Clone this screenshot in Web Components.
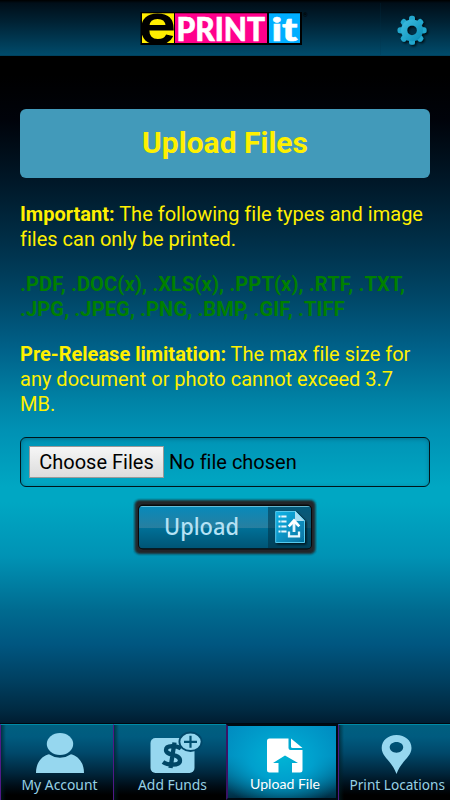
<!DOCTYPE html>
<html lang="en">
<head>
    <meta charset="UTF-8">
    <title>ePRINTit - Upload Files</title>
    <style>
        html, body {
            margin: 0;
            height: 100%;
        }
        body {
            font-family: Roboto, "Liberation Sans", sans-serif;
            font-size: 20px;
            font-variant-ligatures: none;
            line-height: 25px;
            overflow: hidden;
        }
        .types {
            --color: #008000;
            letter-spacing: .16px;
        }
    </style>
</head>
<body>
    <print-app>
        <app-header slot="header"></app-header>
        <page-title>Upload Files</page-title>
        <info-text><b>Important:</b> The following file types and image files can only be printed.</info-text>
        <info-text class="types"><b>.PDF, .DOC(x), .XLS(x), .PPT(x), .RTF, .TXT, .JPG, .JPEG, .PNG, .BMP, .GIF, .TIFF</b></info-text>
        <info-text><b>Pre-Release limitation:</b> The max file size for any document or photo cannot exceed 3.7 MB.</info-text>
        <file-picker><span slot="button">Choose Files</span>No file chosen</file-picker>
        <upload-button></upload-button>
        <nav-bar slot="footer">
            <nav-item label="My Account" left="20.5" width="76">
                <svg width="112" height="76" viewBox="1 0 112 76" fill="#96d7ef">
                    <ellipse cx="60" cy="19" rx="13.2" ry="11"/>
                    <path d="M36 48C36 37 42 31 49 29.200Q60 36.500 71 29.200C78 31 84 37 84 48Z"/>
                </svg>
            </nav-item>
            <nav-item label="Add Funds" left="24" width="69">
                <svg width="112" height="76" viewBox="1 0 112 76">
                    <rect x="37.500" y="13" width="44" height="35" rx="5" fill="#96d7ef"/>
                    <path d="M68 23.500C64 20.500 53 19.500 53 25C53 31 67 28.500 67 35.500C67 41.500 54 40 50 37M61.500 17.500L57.500 43" fill="none" stroke="#004766" stroke-width="4.300"/>
                    <ellipse cx="77.500" cy="16.800" rx="12" ry="10.200" fill="#00486a"/>
                    <ellipse cx="77.500" cy="16.800" rx="10.200" ry="8.300" fill="#96d7ef"/>
                    <path d="M77.500 10.800v12M71 16.800h13" stroke="#005071" stroke-width="2.200"/>
                </svg>
            </nav-item>
            <nav-item label="Upload File" left="22" width="70" active>
                <svg width="112" height="76" viewBox="1.500 1.500 112 76" fill="#fff">
                    <path d="M43 14H62V23.500Q62 25.500 64 25.500H76V45.500Q76 48 73.500 48H65.500V38.500H71.500L58.500 31L46.500 38.500H52V48H43Q40.500 48 40.500 45.500V16.500Q40.500 14 43 14Z"/>
                    <path d="M64.500 14L76 23.500H66Q64.500 23.500 64.500 22Z"/>
                </svg>
            </nav-item>
            <nav-item label="Print Locations" left="10.500" width="95.500">
                <svg width="112" height="76" viewBox="1 0 112 76" fill="#96d7ef" fill-rule="evenodd">
                    <path d="M58.500 10C67 10 73.500 15.500 73.500 23C73.500 32 63 36 58.500 49C54 36 43.700 32 43.700 23C43.700 15.500 50 10 58.500 10ZM58.500 17C54.500 17 51.700 19.300 51.700 22.300S54.500 27.700 58.500 27.700S65.200 25.300 65.200 22.300S62.500 17 58.500 17Z"/>
                </svg>
            </nav-item>
        </nav-bar>
    </print-app>

    <script>
        class PrintApp extends HTMLElement {
            constructor() {
                super();
                this.attachShadow({mode: 'open'}).innerHTML = `
                    <style>
                        :host {
                            display: flex;
                            flex-direction: column;
                            width: 450px;
                            height: 800px;
                            background: linear-gradient(#000 0, #000 75px, #00030a 120px, #001727 180px, #00324c 250px,
                                #004869 300px, #00628a 350px, #0082a5 400px, #0090b3 427px, #00a7c3 487px, #00a7c3 502px,
                                #0093b5 556px, #006b90 610px, #005680 645px, #004061 680px, #002a42 710px, #001c30 724px);
                        }
                        main {
                            display: flex;
                            flex-direction: column;
                            flex: 1;
                            padding: 53px 20px 0;
                        }
                    </style>
                    <slot name="header"></slot>
                    <main><slot></slot></main>
                    <slot name="footer"></slot>
                `;
            }
        }

        class AppHeader extends HTMLElement {
            constructor() {
                super();
                // gear outline with eight rounded teeth
                let teeth = '';
                for (let i = 0; i < 8; i++) {
                    teeth += `<rect x="-3" y="-14.500" width="6" height="8" rx="2.500" transform="rotate(${i * 45})"/>`;
                }
                this.attachShadow({mode: 'open'}).innerHTML = `
                    <style>
                        :host {
                            display: block;
                            height: 56px;
                            background: linear-gradient(#000 0, #000e18 3px, #002234 22px, #004b6b 55px, #003850 56px);
                        }
                        svg { display: block; overflow: visible; }
                    </style>
                    <svg width="450" height="56" viewBox="0 0 450 56">
                        <defs>
                            <linearGradient id="gear" x1="0" y1="0" x2="1" y2="1">
                                <stop offset="0" stop-color="#38b8dc"/>
                                <stop offset="1" stop-color="#0e91b9"/>
                            </linearGradient>
                            <filter id="shade" x="-30%" y="-30%" width="170%" height="170%">
                                <feDropShadow dx="1.500" dy="1.500" stdDeviation="1" flood-color="#000" flood-opacity=".8"/>
                            </filter>
                        </defs>
                        <rect x="140.500" y="12" width="161.500" height="33" fill="#000"/>
                        <rect x="142" y="13.300" width="32" height="29.700" fill="#ffed00"/>
                        <rect x="175" y="13.300" width="92" height="29.700" fill="#ff008c"/>
                        <rect x="269" y="13.300" width="31" height="29.700" fill="#00aeff"/>
                        <text x="139.500" y="43" font-family="Liberation Sans" font-size="54" stroke="#000" stroke-width="1.800" textLength="36" lengthAdjust="spacingAndGlyphs">e</text>
                        <g fill="#fff" stroke="#fff" stroke-width=".6" font-family="Lato" font-weight="900">
                            <text x="176.500" y="40.500" font-size="33" textLength="88.500" lengthAdjust="spacingAndGlyphs">PRINT</text>
                            <text x="271.500" y="40.500" font-size="33" textLength="26" lengthAdjust="spacingAndGlyphs">it</text>
                        </g>
                        <text x="303" y="17" font-size="6">®</text>
                        <path d="M380.500 3V55" stroke="#00334b" opacity=".2"/>
                        <g transform="translate(412 30.300)" filter="url(#shade)">
                            <g fill="#22a7cd">${teeth}</g>
                            <circle r="7.900" fill="none" stroke="url(#gear)" stroke-width="6"/>
                        </g>
                    </svg>
                `;
            }
        }

        class PageTitle extends HTMLElement {
            constructor() {
                super();
                this.attachShadow({mode: 'open'}).innerHTML = `
                    <style>
                        :host {
                            display: flex;
                            align-items: center;
                            justify-content: center;
                            box-sizing: border-box;
                            height: 69px;
                            margin-bottom: 24px;
                            padding-bottom: 2px;
                            border-radius: 6px;
                            background: #429aba;
                            color: #fff000;
                            font-size: 30px;
                            font-weight: bold;
                        }
                    </style>
                    <slot></slot>
                `;
            }
        }

        class InfoText extends HTMLElement {
            constructor() {
                super();
                this.attachShadow({mode: 'open'}).innerHTML = `
                    <style>
                        :host {
                            display: block;
                            margin-bottom: 20px;
                            color: var(--color, #fff000);
                        }
                    </style>
                    <slot></slot>
                `;
            }
        }

        class FilePicker extends HTMLElement {
            constructor() {
                super();
                this.attachShadow({mode: 'open'}).innerHTML = `
                    <style>
                        :host {
                            display: flex;
                            align-items: center;
                            gap: 5px;
                            box-sizing: border-box;
                            height: 50px;
                            padding-left: 8px;
                            border: 1px solid #00151b;
                            border-radius: 6px;
                            box-shadow: inset 0 1px 4px rgba(0, 60, 80, .4);
                            color: #000;
                        }
                        button {
                            box-sizing: border-box;
                            width: 135px;
                            height: 32px;
                            padding: 0;
                            border: 1px solid #999;
                            outline: 0;
                            background: linear-gradient(#f6f6f6, #dcdcdc);
                            font: inherit;
                            color: inherit;
                            white-space: nowrap;
                        }
                    </style>
                    <button><slot name="button"></slot></button>
                    <slot></slot>
                `;
            }
        }

        class UploadButton extends HTMLElement {
            constructor() {
                super();
                this.attachShadow({mode: 'open'}).innerHTML = `
                    <style>
                        :host {
                            display: block;
                            align-self: center;
                            margin-top: 11px;
                        }
                        svg { display: block; }
                    </style>
                    <svg width="184" height="58" viewBox="133 498 184 58">
                        <defs>
                            <linearGradient id="face" x1="0" y1="0" x2="0" y2="1">
                                <stop offset="0" stop-color="#078abb"/>
                                <stop offset=".51" stop-color="#277fa0"/>
                                <stop offset=".53" stop-color="#006f96"/>
                                <stop offset="1" stop-color="#005474"/>
                            </linearGradient>
                            <linearGradient id="paper" x1="0" y1="0" x2="1" y2="1">
                                <stop offset="0" stop-color="#13b5e8"/>
                                <stop offset="1" stop-color="#05719f"/>
                            </linearGradient>
                            <filter id="soft"><feGaussianBlur stdDeviation=".8"/></filter>
                            <filter id="drop"><feDropShadow dx="1.500" dy="1.500" stdDeviation="1" flood-opacity=".7"/></filter>
                            <clipPath id="inner"><rect x="139" y="506" width="172" height="42.500" rx="4"/></clipPath>
                        </defs>
                        <rect x="134.500" y="500" width="181" height="54" rx="5" fill="#20282b" filter="url(#soft)"/>
                        <rect x="138" y="504.500" width="174" height="45" rx="5" fill="#07090a"/>
                        <g clip-path="url(#inner)">
                            <rect x="139" y="506" width="172" height="42.500" fill="url(#face)"/>
                            <rect x="268" y="506" width="43" height="42.500" fill="#002c3e" opacity=".5"/>
                            <path d="M139 506.500H311" stroke="#7ccbe2" opacity=".8"/>
                        </g>
                        <text x="164" y="534.500" font-family="Noto Sans" font-size="24" font-weight="500" fill="#b5e2f5" textLength="75" lengthAdjust="spacingAndGlyphs">Upload</text>
                        <g filter="url(#drop)">
                            <path d="M275.700 511.500H295.500L304.500 520.500V542.500H275.700Z" fill="url(#paper)" stroke="#55c9ed" stroke-width="1"/>
                            <path d="M295 511V521H304.500Z" fill="#aadff3"/>
                            <g stroke="#e9f7fd" fill="none">
                                <path d="M278.500 516.500H286.500M278.500 521.500H286.500M278.500 526.500H286.500M278.500 531.500H286.500" stroke-width="2.200" stroke-dasharray="2 .8 5.200 0"/>
                                <path d="M289 531.500V536.300H299V531.500" stroke-width="2.300"/>
                                <path d="M294 532V523" stroke-width="2.800"/>
                            </g>
                            <path d="M287.700 525.500L294 518.500L300.300 525.500L298.300 527.200L294 523L289.700 527.200Z" fill="#fff"/>
                        </g>
                    </svg>
                `;
            }
        }

        class NavBar extends HTMLElement {
            constructor() {
                super();
                this.attachShadow({mode: 'open'}).innerHTML = `
                    <style>
                        :host {
                            display: grid;
                            grid-template-columns: 113px 113px 112px 112px;
                            height: 77px;
                            border-top: 1px solid #000810;
                            box-sizing: border-box;
                            background: #000;
                        }
                    </style>
                    <slot></slot>
                `;
            }
        }

        class NavItem extends HTMLElement {
            constructor() {
                super();
                this.attachShadow({mode: 'open'});
            }

            connectedCallback() {
                const active = this.hasAttribute('active');
                this.shadowRoot.innerHTML = `
                    <style>
                        :host {
                            display: grid;
                            box-sizing: border-box;
                            border-left: 1px solid #501987;
                            border-top: 1px solid #008aa6;
                            background:
                                linear-gradient(90deg, rgba(0, 30, 35, .65), transparent 5px),
                                linear-gradient(#006080 0, #005b7f 12px, #00486a 28px, #00263c 48px, #000d17 61px, #000 70px);
                        }
                        :host([active]) {
                            border: 2px solid #000b13;
                            border-left-color: #391465;
                            background: radial-gradient(ellipse 70px 52px at 50% 43%, #00b4d5 0, #00a0cd 45%, transparent 100%),
                                linear-gradient(#008ac0 0, #0087b9 30px, #006289 50px, #002d43 72px);
                        }
                        slot, .label { grid-area: 1 / 1; display: block; }
                        slot { height: 0; }
                        .label { overflow: visible; }
                    </style>
                    <slot></slot>
                    <svg class="label" width="110" height="72">
                        <text x="${this.getAttribute('left')}" y="${active ? 63 : 64.5}"
                            font-family="${active ? 'Lato' : 'Noto Sans'}" font-size="13.500"
                            fill="${active ? '#fff' : '#96d1e5'}"
                            textLength="${this.getAttribute('width')}" lengthAdjust="spacingAndGlyphs">${this.getAttribute('label')}</text>
                    </svg>
                `;
            }
        }

        customElements.define('print-app', PrintApp);
        customElements.define('app-header', AppHeader);
        customElements.define('page-title', PageTitle);
        customElements.define('info-text', InfoText);
        customElements.define('file-picker', FilePicker);
        customElements.define('upload-button', UploadButton);
        customElements.define('nav-bar', NavBar);
        customElements.define('nav-item', NavItem);
    </script>
</body>
</html>
